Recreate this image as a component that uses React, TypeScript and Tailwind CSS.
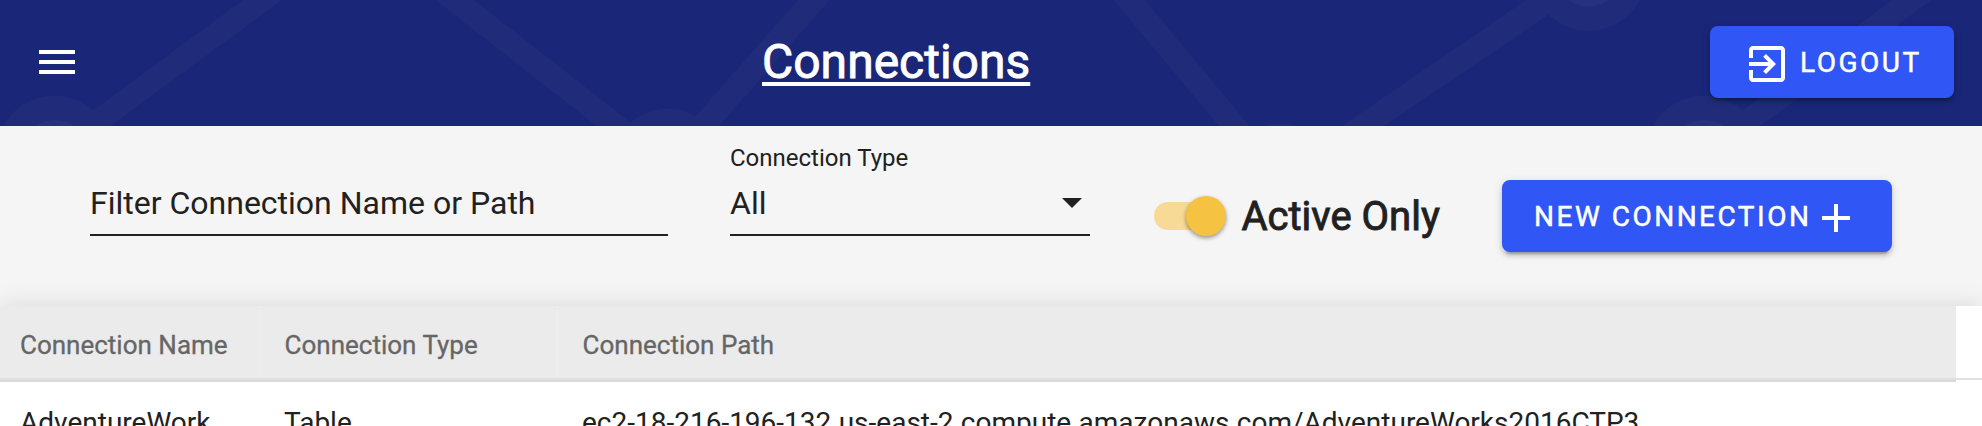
import React from "react";

function HeaderPattern() {
  const tiles = [0, 1649.5];
  return (
    <svg className="absolute inset-0 h-full w-full" viewBox="0 0 1982 126" preserveAspectRatio="none" aria-hidden="true">
      {tiles.map((offset) => (
        <g key={offset} transform={`translate(${offset} 0)`}>
          <path
            fill="#202c7a"
            d="M243 0H282L110.7 126H3.4A58 58 0 0 1 93 110.4ZM435.6 0H474L630.5 122.3A58 58 0 0 1 695.8 116L798 0H829.6L719 126H596.4ZM1113.3 0H1144.9L1249.6 126H1219ZM1266 126A58 58 0 0 1 1298 126ZM1526 0H1640A58 58 0 0 1 1548.4 14.7L1384.2 126H1342Z"
          />
          <circle cx="54.7" cy="154" r="34" fill="#27327f" />
          <circle cx="1588.5" cy="-27" r="33.5" fill="#27327f" />
        </g>
      ))}
    </svg>
  );
}

function Header() {
  return (
    <header className="relative h-[126px] bg-[#1a2678] text-white">
      <HeaderPattern />
      <div className="relative grid h-full grid-cols-[762px_268px_1fr] items-center">
        <button className="ml-[33px] mt-[-2px] size-12" aria-label="Menu">
          <svg viewBox="0 0 24 24" className="size-12" fill="currentColor">
            <path d="M3 6h18v2H3zM3 11h18v2H3zM3 16h18v2H3z" />
          </svg>
        </button>
        <h1 className="mt-[-2px] whitespace-nowrap text-5xl leading-[64px] underline decoration-4 underline-offset-[4px] [-webkit-text-stroke:0.9px_currentColor]">
          Connections
        </h1>
        <button className="mr-7 mt-[-2px] flex h-[72px] w-[244px] items-center justify-self-end rounded-lg bg-[#3056f5] pl-[33px] shadow-[0_6px_2px_-4px_rgba(0,0,0,0.2),0_4px_4px_rgba(0,0,0,0.14),0_2px_10px_rgba(0,0,0,0.12)]">
          <svg viewBox="0 0 24 24" className="mt-1 size-12" fill="currentColor">
            <path d="M10.09 15.59 11.5 17l5-5-5-5-1.41 1.41L12.67 11H3v2h9.67l-2.58 2.59ZM19 3H5c-1.11 0-2 .9-2 2v4h2V5h14v14H5v-4H3v4c0 1.1.89 2 2 2h14c1.1 0 2-.9 2-2V5c0-1.1-.9-2-2-2Z" />
          </svg>
          <span className="ml-[9px] mt-[2px] text-[28px] leading-[42px] tracking-[2.5px] [-webkit-text-stroke:0.5px_currentColor]">LOGOUT</span>
        </button>
      </div>
    </header>
  );
}

function Filters() {
  return (
    <section className="flex h-[180px] items-start bg-[#f5f5f5] pl-[90px] text-[#212121]">
      <div className="mt-[56px] flex h-[54px] w-[578px] border-b-2 border-[#212121]">
        <span className="mt-px whitespace-nowrap text-[32px] leading-10">Filter Connection Name or Path</span>
      </div>
      <div className="ml-[62px] mt-[16px] flex h-[94px] w-[360px] flex-col border-b-2 border-[#212121]">
        <span className="whitespace-nowrap text-2xl leading-8">Connection Type</span>
        <div className="mt-[9px] flex items-center justify-between pr-2">
          <span className="text-[32px] leading-10">All</span>
          <svg viewBox="0 0 20 10" className="h-[10px] w-5" fill="currentColor">
            <path d="M0 0h20L10 10Z" />
          </svg>
        </div>
      </div>
      <div className="ml-16 mt-[66px] flex h-12 items-center">
        <div className="flex h-7 w-[72px] items-center">
          <div className="h-7 w-16 rounded-full bg-[#f6da95]" />
          <div className="ml-[-32px] size-10 shrink-0 rounded-full bg-[#f5c242] shadow-[0_2px_4px_rgba(0,0,0,0.4)]" />
        </div>
        <span className="ml-[15.5px] mt-[2px] w-[260.5px] whitespace-nowrap text-[40px] leading-[60px] [-webkit-text-stroke:0.9px_currentColor]">
          Active Only
        </span>
      </div>
      <button className="mt-[54px] flex h-[72px] w-[390px] shrink-0 items-center rounded-lg bg-[#3056f5] pl-8 text-white shadow-[0_6px_2px_-4px_rgba(0,0,0,0.2),0_4px_4px_rgba(0,0,0,0.14),0_2px_10px_rgba(0,0,0,0.12)]">
        <span className="mt-[2px] w-[278px] whitespace-nowrap text-left text-[28px] leading-[42px] tracking-[2.5px] [-webkit-text-stroke:0.5px_currentColor]">
          NEW CONNECTION
        </span>
        <svg viewBox="0 0 24 24" className="mt-1 size-12" fill="currentColor">
          <path d="M19 13h-6v6h-2v-6H5v-2h6V5h2v6h6Z" />
        </svg>
      </button>
    </section>
  );
}

function ConnectionTable() {
  return (
    <section className="relative h-[120px] bg-white shadow-[0_0_24px_rgba(0,0,0,0.12)]">
      <div className="flex h-[76px]">
        <div className="grid h-[76px] w-[1956px] grid-cols-[260px_298px_1fr] border-b-2 border-[#d9d9d9] bg-[#ebebeb] text-[26px] leading-[66px] text-[#666666] [-webkit-text-stroke:0.3px_currentColor]">
          <div className="border-b-2 border-[#e0e0e0] pl-5 pt-[6px] shadow-[inset_-1px_0_0_#eeeeee]">Connection Name</div>
          <div className="border-b-2 border-[#e0e0e0] pl-[24.6px] pt-[6px] shadow-[inset_-1px_0_0_#eeeeee]">Connection Type</div>
          <div className="border-b-2 border-[#e0e0e0] pl-[24.6px] pt-[6px]">Connection Path</div>
        </div>
        <div className="h-[74px] flex-1 border-b-2 border-[#e0e0e0]" />
      </div>
      <div className="grid h-[44px] grid-cols-[260px_298px_1fr] overflow-hidden text-[28px] leading-[82px] text-[#212121]">
        <div className="pl-5">AdventureWork</div>
        <div className="pl-6">Table</div>
        <div className="pl-6">ec2-18-216-196-132.us-east-2.compute.amazonaws.com/AdventureWorks2016CTP3</div>
      </div>
    </section>
  );
}

export default function App() {
  return (
    <main className="h-[426px] w-[1982px] overflow-hidden bg-white font-['Roboto',sans-serif]">
      <Header />
      <Filters />
      <ConnectionTable />
    </main>
  );
}
